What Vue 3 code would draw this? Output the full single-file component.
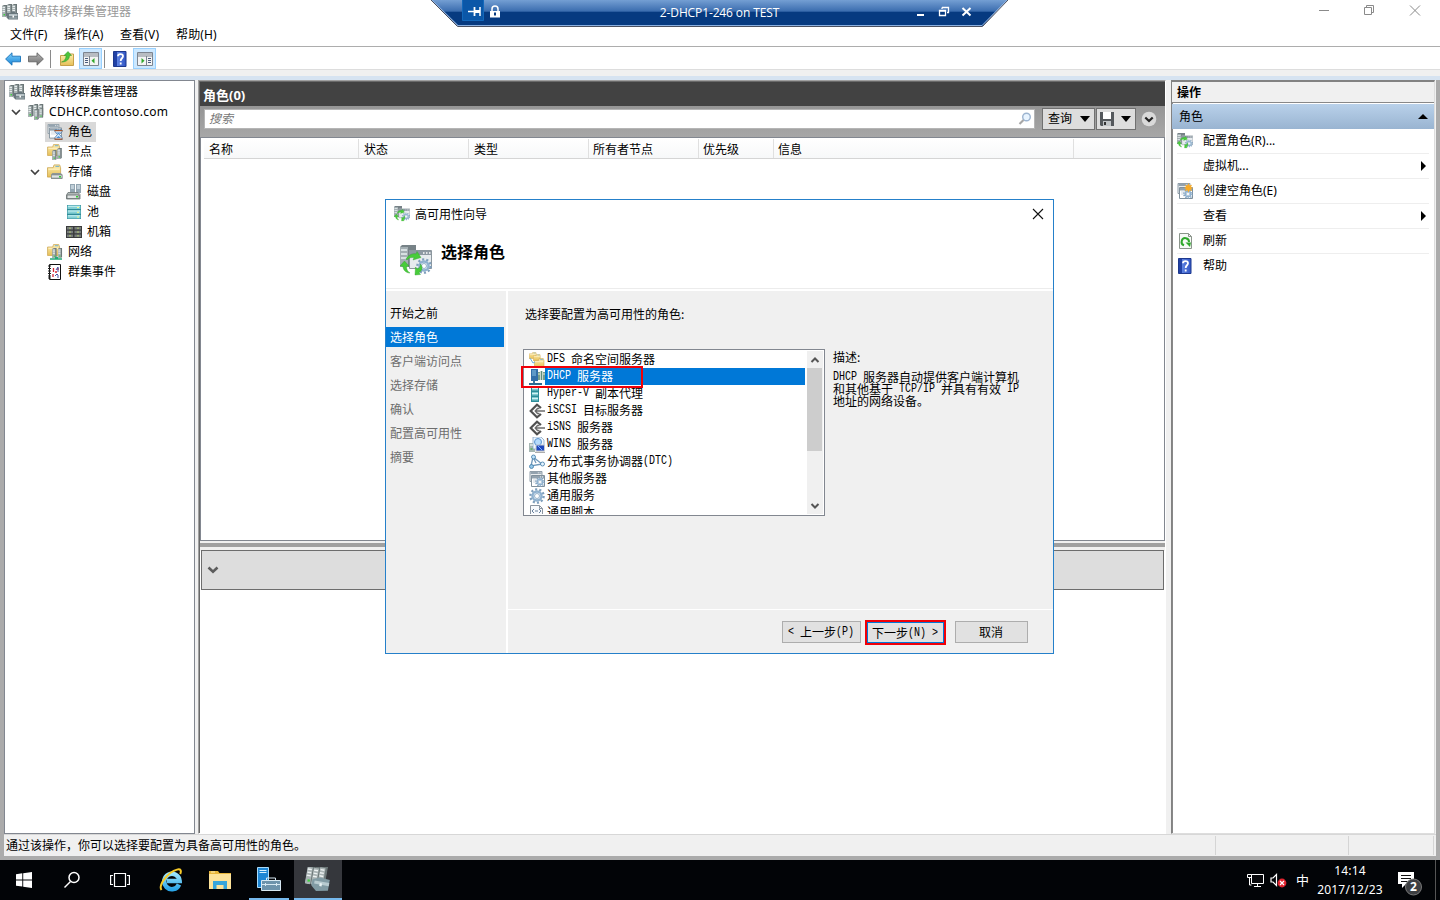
<script setup>
import { h } from 'vue'

// Splits mixed text so that the narrow console-style Latin runs keep a 6px advance.
const Sun = (props) =>
  h('span', { class: 'sun' }, props.t.split(/([\x20-\x7e]+)/).filter(Boolean).map((s) =>
    /^[\x20-\x7e]+$/.test(s) ? h('span', { class: 'lat' }, s) : s))
Sun.props = ['t']

const menus = ['文件(F)', '操作(A)', '查看(V)', '帮助(H)']
const tree = [
  { t: '故障转移群集管理器', i: 'cluster', l: 0 },
  { t: 'CDHCP.contoso.com', i: 'servers', l: 1, open: true, wide: true },
  { t: '角色', i: 'roles', l: 2, on: true },
  { t: '节点', i: 'nodes', l: 2 },
  { t: '存储', i: 'storage', l: 2, open: true },
  { t: '磁盘', i: 'disk', l: 3 },
  { t: '池', i: 'pool', l: 3 },
  { t: '机箱', i: 'chassis', l: 3 },
  { t: '网络', i: 'network', l: 2 },
  { t: '群集事件', i: 'events', l: 2 }
]
const columns = ['名称', '状态', '类型', '所有者节点', '优先级', '信息', '']
const actions = [
  { t: '配置角色(R)...', i: 'wizard' },
  { t: '虚拟机...', sub: true },
  { t: '创建空角色(E)', i: 'newrole' },
  { t: '查看', sub: true },
  { t: '刷新', i: 'refresh' },
  { t: '帮助', i: 'help' }
]
const steps = ['开始之前', '选择角色', '客户端访问点', '选择存储', '确认', '配置高可用性', '摘要']
const roles = [
  ['dfs', 'DFS 命名空间服务器'],
  ['dhcp', 'DHCP 服务器'],
  ['hyperv', 'Hyper-V 副本代理'],
  ['iscsi', 'iSCSI 目标服务器'],
  ['iscsi', 'iSNS 服务器'],
  ['wins', 'WINS 服务器'],
  ['dtc', '分布式事务协调器(DTC)'],
  ['other', '其他服务器'],
  ['gear', '通用服务'],
  ['scripticon', '通用脚本']
]
const desc = ['DHCP 服务器自动提供客户端计算机', '和其他基于 TCP/IP 并具有有效 IP', '地址的网络设备。']
</script>

<template>
  <div class="screen">
    <svg class="defs" width="0" height="0">
      <defs>
        <linearGradient id="gBlue" x1="0" y1="0" x2="0" y2="1"><stop offset="0" stop-color="#7fd0fa" /><stop offset="1" stop-color="#1583d8" /></linearGradient>
        <linearGradient id="gGray" x1="0" y1="0" x2="0" y2="1"><stop offset="0" stop-color="#b5b5b5" /><stop offset="1" stop-color="#707070" /></linearGradient>
        <linearGradient id="gFold" x1="0" y1="0" x2="0" y2="1"><stop offset="0" stop-color="#fdeeb0" /><stop offset="1" stop-color="#e6bf57" /></linearGradient>
        <linearGradient id="gHelp" x1="0" y1="0" x2="1" y2="0"><stop offset="0" stop-color="#2141a5" /><stop offset=".3" stop-color="#2141a5" /><stop offset=".32" stop-color="#5b80e0" /><stop offset="1" stop-color="#3256c4" /></linearGradient>
        <linearGradient id="gBar" x1="0" y1="0" x2="0" y2="1"><stop offset="0" stop-color="#79a3d6" /><stop offset=".46" stop-color="#3a6cae" /><stop offset=".47" stop-color="#063a80" /><stop offset="1" stop-color="#063a80" /></linearGradient>
        <linearGradient id="gIe" x1="0" y1="0" x2="0" y2="1"><stop offset="0" stop-color="#9be6fd" /><stop offset="1" stop-color="#2ba6e8" /></linearGradient>
      </defs>
      <symbol id="srv" viewBox="0 0 5 12">
        <path d="M0 1l2-1h3v11l-2 1H0z" fill="#6c7778" /><path d="M0 1h3.5v11H0z" fill="#a9b3b4" />
        <path d="M.5 2.5h2.5M.5 4.5h2.5M.5 6.5h2.5" stroke="#eef3f3" stroke-width=".9" /><path d="M1.5 9h1.5v1.4H1.5z" fill="#3fd13f" />
      </symbol>
      <symbol id="servers" viewBox="0 0 16 16">
        <use href="#srv" x="0" y="1" width="5" height="12" /><use href="#srv" x="5.2" y="0" width="5" height="12" /><use href="#srv" x="10.5" y="0" width="5" height="12" />
        <use href="#srv" x="6" y="5" width="5" height="11" /><use href="#srv" x="11" y="4" width="4.5" height="10" />
      </symbol>
      <symbol id="cluster" viewBox="0 0 16 16">
        <use href="#srv" x="0" y="1" width="5" height="12" /><use href="#srv" x="5" y="0" width="5" height="12" /><use href="#srv" x="10" y="0" width="5" height="12" />
        <path d="M4.5 9h4l1-1.500h3l1 1.500H16v6.500H6.500l-2-2z" fill="#69777d" /><path d="M7 10h8.500v2H7z" fill="#b6c2c6" /><path d="M7 12.500h8.500V15H7z" fill="#8b999e" /><path d="M10.500 11.500h1.500v2h-1.500z" fill="#fff" />
      </symbol>
      <symbol id="win" viewBox="0 0 14 12">
        <path d="M.5.5h13v11H.5z" fill="#fff" stroke="#80909c" /><path d="M1 1h12v2.500H1z" fill="#93a2ae" /><path d="M9 2h1m1 0h1" stroke="#fff" /><path d="M2 5h10M2 7h10" stroke="#ccd6df" />
      </symbol>
      <symbol id="roles" viewBox="0 0 16 16">
        <use href="#win" x="0" y="0" width="13" height="10" /><use href="#win" x="2" y="3" width="13" height="12" />
        <path d="M8 6h7v1.500l-2.500 3 2.500 3V15.500H8v-2l2.500-3L8 7.500z" fill="#dcefff" stroke="#3b6ea5" stroke-width=".8" /><path d="M7.500 6h8v1.300h-8zM7.500 14.500h8v1.300h-8z" fill="#a5562c" /><path d="M9.500 8.500h4l-2 2zM9 14l2.500-2 2.500 2z" fill="#4d92d8" />
      </symbol>
      <symbol id="folder" viewBox="0 0 16 14">
        <path d="M.5 3.500h6l1-3h6l1 3v10h-14z" fill="url(#gFold)" stroke="#c9a046" stroke-width=".8" /><path d="M9 2h4" stroke="#5aa6d8" /><path d="M1.500 5h12" stroke="#fff6d2" />
      </symbol>
      <symbol id="nodes" viewBox="0 0 16 16">
        <use href="#folder" x="0" y="0" width="14" height="12" /><use href="#srv" x="5" y="6" width="5" height="10" /><use href="#srv" x="10" y="4" width="5" height="11" />
      </symbol>
      <symbol id="storage" viewBox="0 0 16 16">
        <use href="#folder" x="0" y="0" width="15" height="14" /><path d="M4 10.500l1.500-1.500h8l2 1.500V15H4z" fill="#8e9696" /><path d="M4.500 11h10.500v3H4.500z" fill="#dfe4e4" stroke="#808888" stroke-width=".6" /><path d="M12 12h2v1.500h-2z" fill="#32cd32" />
      </symbol>
      <symbol id="disk" viewBox="0 0 16 16">
        <path d="M4 0h5v9H4zM10 0h5v9h-5z" fill="#93a6b2" /><path d="M5 2h3M5 4h3M11 2h3M11 4h3" stroke="#eef8ff" /><path d="M2 8.500h10l2 2V15H.5v-4z" fill="#b0b8b8" stroke="#6b7474" stroke-width=".8" /><path d="M1 11h12v3.500H1z" fill="#dfe3e3" stroke="#677070" stroke-width=".8" /><path d="M10 12h2v1.500h-2z" fill="#32cd32" />
      </symbol>
      <symbol id="pool" viewBox="0 0 16 16">
        <path d="M1 1h14v14H1z" fill="#2f8c98" /><path d="M1.500 1.500h13v3.500h-13zM1.500 6.200h13v3.500h-13zM1.500 11h13v3.500h-13z" fill="#84cfd5" /><path d="M2 2.300h12M2 7h12M2 11.800h12" stroke="#c8f0f2" /><path d="M11 3.500h2M11 8.300h2M11 13h2" stroke="#f4fb8c" />
      </symbol>
      <symbol id="chassis" viewBox="0 0 16 16">
        <path d="M0 2h16v12H0z" fill="#3a3c3c" /><path d="M1 3h6v2.500H1zM1 6.800h6v2.500H1zM1 10.600h6V13H1zM8.500 3H15v2.500H8.500zM8.500 6.800H15v2.500H8.500zM8.500 10.600H15V13H8.500z" fill="#777c7c" /><path d="M4 3.500v1.500M4 7.300v1.500M4 11v1.500M12 3.500v1.500M12 7.300v1.500M12 11v1.500" stroke="#c6e36b" />
      </symbol>
      <symbol id="network" viewBox="0 0 16 16">
        <use href="#folder" x="0" y="0" width="14" height="12" /><use href="#srv" x="5" y="4" width="5" height="10" /><use href="#srv" x="10.500" y="4" width="5" height="10" /><path d="M3 15h12M8 13.500h3" stroke="#25a978" stroke-width="1.600" />
      </symbol>
      <symbol id="events" viewBox="0 0 16 16">
        <path d="M2.500.5h11v15h-11z" fill="#fff" stroke="#111" /><path d="M1 2h3M1 4.500h3M1 7h3M1 9.500h3M1 12h3M1 14h3" stroke="#222" /><path d="M6.500 4v4M6 10v3M8 8h2M11 4v2" stroke="#d32633" stroke-width="1.300" /><path d="M9 6l2-3v5M8 12l2-2 1 1v3" fill="none" stroke="#4453a5" />
      </symbol>
      <symbol id="gear" viewBox="0 0 16 16">
        <circle cx="8" cy="8" r="6.600" fill="none" stroke="#7f9fbc" stroke-width="2.400" stroke-dasharray="2.100 2.046" /><circle cx="8" cy="8" r="4.500" fill="#edf5fc" stroke="#8fb1cf" stroke-width="2.400" /><circle cx="8" cy="8" r="2.500" fill="#fff" stroke="#6f94b4" stroke-width=".7" />
      </symbol>
      <symbol id="wizard" viewBox="0 0 32 32">
        <path d="M0 2l2-2h14v22H0z" fill="#778287" /><path d="M0 2h8v20H0z" fill="#a4afb3" /><path d="M1 5h6M1 9h6M1 13h6" stroke="#e9f1f2" stroke-width="1.500" />
        <path d="M9.500 5.500h22v18h-22z" fill="#e6ebee" stroke="#8c979e" /><path d="M10 6h21v4H10z" fill="#8d99a2" /><path d="M23 8h1.500M26 8h1.500M29 8h1.500" stroke="#fff" stroke-width="1.500" />
        <use href="#gear" x="16" y="13" width="16" height="16" /><path d="M6 14c3-5 8-6 10-5l1-2.500 4 6-8 2.500 1-2.500c-3 0-5 0-7 2.500zM0 21l4.500-5 4.500 5-2.500.5c0 3 1 5 3.500 6.500-4 0-7-3-7-6.500zM15 30l.5-8 2 2c2-1 3-3 3-5 3 4 1 7-1.500 8.500l1.500 2z" fill="#48cc3a" stroke="#2d9c2a" stroke-width=".4" />
      </symbol>
      <symbol id="other" viewBox="0 0 16 16">
        <use href="#win" x="0" y="0" width="14" height="11" /><use href="#win" x="2" y="4" width="14" height="12" /><use href="#gear" x="6" y="6" width="10" height="10" />
      </symbol>
      <symbol id="newrole" viewBox="0 0 16 16">
        <use href="#other" width="16" height="16" /><path d="M11.500 0l1 2.500 2.500-.8-1 2.300 2 1-2 1 1 2-2.500-.8-1 2.300-1-2.300L8 8l1-2-2-1 2-1-1-2.300 2.500.8z" fill="#f8ab27" />
      </symbol>
      <symbol id="refresh" viewBox="0 0 16 16">
        <path d="M2.500.5h9l3 3v12h-12z" fill="#f7faf7" stroke="#8b958b" /><path d="M11.500.5v3h3" fill="none" stroke="#8b958b" /><path d="M7 12.300A3.700 3.700 0 1 1 12 9" fill="none" stroke="#2ea82b" stroke-width="2" /><path d="M8.500 9.500h5.500l-1 4.500z" fill="#2ea82b" />
      </symbol>
      <symbol id="help" viewBox="0 0 16 16">
        <path d="M1.500.5h12.500v15H1.500z" fill="url(#gHelp)" stroke="#1d388e" /><path d="M6 5.300C6 2.500 11 2.500 11 5.300c0 2-2.300 2-2.300 4.700M8.700 11.500v2" fill="none" stroke="#fff" stroke-width="1.800" />
      </symbol>
      <symbol id="dfs" viewBox="0 0 16 16">
        <use href="#folder" x="0" y="0" width="8" height="7" /><use href="#folder" x="4" y="2" width="8" height="7" /><use href="#folder" x="5" y="6" width="11" height="10" /><path d="M1 6l3 5 2-1" fill="none" stroke="#6db1dc" />
      </symbol>
      <symbol id="dhcp" viewBox="0 0 16 16">
        <path d="M2 0h7v12H2z" fill="#316fa9" /><path d="M3 2h4M3 4h4M3 6h4" stroke="#8bc5e5" /><path d="M10 3v8M12.500 2v9M15 3v8" stroke="#5f8f77" stroke-width="1.700" /><path d="M9.500 5h1M14.500 5h1" stroke="#eec" stroke-width="2" /><path d="M5 12v2M0 15h13" stroke="#2b6a93" stroke-width="1.800" />
      </symbol>
      <symbol id="hyperv" viewBox="0 0 16 16">
        <path d="M2 0h8v16H2z" fill="#2c8c98" /><path d="M3 1h6v3.500H3zM3 6h6v3.500H3zM3 11h6v3.500H3z" fill="#7fc9d0" /><path d="M3 2.500h6M3 7.500h6M3 12.500h6" stroke="#d0f2f3" />
      </symbol>
      <symbol id="iscsi" viewBox="0 0 16 16">
        <path d="M12 5L8 1.700 1.700 8 8 14.300 12 11" fill="none" stroke="#505050" stroke-width="2.200" /><path d="M7 8h9M10.500 5.500L8.500 5.500 6.300 8l2.200 2.500h2" fill="none" stroke="#6c6c6c" stroke-width="1.500" />
      </symbol>
      <symbol id="wins" viewBox="0 0 16 16">
        <path d="M0 6h6v9H0z" fill="#a6b7b3" /><path d="M4 0h8l3 3v9H4z" fill="#eef7ff" stroke="#7698bd" stroke-width=".7" /><circle cx="9" cy="5" r="3.500" fill="#b4dafb" stroke="#5b94d0" /><path d="M7 8h8.500v6H7z" fill="#1d46bd" stroke="#c7cbd0" /><path d="M9 9l4 4" stroke="#7fb0ff" /><path d="M6 15.300h10" stroke="#999" /><path d="M1 8h3" stroke="#fff" /><path d="M1.500 12h2" stroke="#2ea82b" />
      </symbol>
      <symbol id="dtc" viewBox="0 0 16 16">
        <path d="M4 3l-2 9 11-2zM4 3l3 6" fill="none" stroke="#7098ba" stroke-width="1.300" /><circle cx="4.500" cy="3" r="2" fill="#bfe2fa" stroke="#3f78a5" stroke-width=".8" /><circle cx="2.500" cy="12.500" r="2" fill="#92c7e9" stroke="#3f78a5" stroke-width=".8" /><circle cx="13.500" cy="10" r="2" fill="#e4f4ff" stroke="#3f78a5" stroke-width=".8" />
      </symbol>
      <symbol id="scripticon" viewBox="0 0 16 16">
        <path d="M1.500.5h9l3 3v12h-12z" fill="#f7f9fc" stroke="#8b95a0" /><path d="M10.500.5v3h3" fill="none" stroke="#8b95a0" /><path d="M5 4L3 6l2 2M10 4l2 2-2 2M6 6h3" fill="none" stroke="#68819c" />
      </symbol>
    </svg>

    <header class="titlebar">
      <svg class="i16"><use href="#cluster" /></svg><span>故障转移群集管理器</span>
      <svg class="caption" width="104" height="16" viewBox="0 0 104 16" fill="none" stroke="#8a8a8a"><path d="M1 8.500h10M46.500 5.500h7v7h-7zM48.500 5.500v-2h7v7h-2M92 3.500l10 10M102 3.500l-10 10" /></svg>
    </header>
    <nav class="menubar"><span v-for="m in menus" :key="m">{{ m }}</span></nav>
    <div class="toolbar">
      <svg class="tb arrow" viewBox="0 0 16 16"><path d="M.6 8L7 1.800v3.400h8.500v5.600H7v3.400z" fill="url(#gBlue)" stroke="#1872b8" stroke-width=".9" /></svg>
      <svg class="tb arrow2" viewBox="0 0 16 16"><path d="M15.400 8L9 1.800v3.400H.5v5.600H9v3.400z" fill="url(#gGray)" stroke="#666" stroke-width=".9" /></svg>
      <i class="sep s1"></i>
      <svg class="tb up" viewBox="0 0 16 16"><path d="M1.500 4.500h5l1-1.500h7v11.500h-13z" fill="url(#gFold)" stroke="#c6a04a" /><path d="M2.500 11C6 10 7 7 7 4.500H5L9 .5l3.500 4h-2C10.500 8 8 11 2.500 11z" fill="#4bc43b" stroke="#2a9122" stroke-width=".5" /></svg>
      <span class="tog t1"><svg width="16" height="16" viewBox="0 0 16 16"><path d="M.5 1.500h15v13H.5z" fill="#f4f4f4" stroke="#7d8590" /><path d="M1 3h14M.5 5h15" stroke="#7d8590" /><path d="M6.500 5v9" stroke="#7d8590" /><path d="M2 7.500h3M2 9.500h3M2 11.500h3" stroke="#4a5b7c" /><path d="M11.500 7v5.500L8.500 9.700z" fill="#31a82b" /></svg></span>
      <i class="sep s2"></i>
      <svg class="tb hp"><use href="#help" /></svg>
      <span class="tog t2"><svg width="16" height="16" viewBox="0 0 16 16"><path d="M.5 1.500h15v13H.5z" fill="#f4f4f4" stroke="#7d8590" /><path d="M1 3h14M.5 5h15" stroke="#7d8590" /><path d="M9.500 5v9" stroke="#7d8590" /><path d="M11 7.500h3M11 9.500h3M11 11.500h3" stroke="#4a5b7c" /><path d="M4.500 7v5.500l3-2.800z" fill="#31a82b" /></svg></span>
    </div>

    <div class="work">
      <div class="frame">
        <aside class="tree">
          <div v-for="n in tree" :key="n.t" class="node" :class="'l' + n.l">
            <svg v-if="n.open" class="chev" viewBox="0 0 10 10"><path d="M1 3l4 4 4-4" fill="none" stroke="#404040" stroke-width="1.700" /></svg>
            <span class="nlabel" :class="{ on: n.on }"><svg class="i16"><use :href="'#' + n.i" /></svg><b :class="{ wide: n.wide }">{{ n.t }}</b></span>
          </div>
        </aside>

        <main class="center">
          <h1>角色(0)</h1>
          <div class="searchrow">
            <div class="search"><em>搜索</em><svg width="14" height="14" viewBox="0 0 14 14"><circle cx="8.500" cy="5" r="3.800" fill="#e8f4ff" stroke="#9cb4d0" stroke-width="1.400" /><path d="M5.500 8L1.500 12" stroke="#a7a7a7" stroke-width="2.200" /></svg></div>
            <div class="qbtn">查询<i class="dd"></i></div>
            <div class="qbtn save"><svg width="14" height="14" viewBox="0 0 14 14"><path d="M0 0h14v14H1l-1-1z" fill="#54585c" /><path d="M3 0h8v7H3z" fill="#fff" /><path d="M3 9h8v5H3z" fill="#bfc3c6" /><path d="M4 10h2v3H4z" fill="#333" /></svg><i class="dd"></i></div>
            <svg class="round" width="16" height="16" viewBox="0 0 16 16"><circle cx="8" cy="8" r="7.300" fill="#d9d9d9" /><path d="M4.300 6.500L8 10l3.700-3.500" fill="none" stroke="#222" stroke-width="2.200" /></svg>
          </div>
          <div class="list"><div class="cols"><span v-for="(c, k) in columns" :key="k">{{ c }}</span></div></div>
          <div class="split"></div>
          <div class="detail"><svg width="12" height="10" viewBox="0 0 12 10"><path d="M1.500 2.500L6 6.700l4.500-4.200" fill="none" stroke="#5c5c5c" stroke-width="2.600" /></svg></div>
        </main>

        <aside class="actions">
          <div class="ahead">操作</div>
          <div class="asec">角色<i></i></div>
          <div v-for="a in actions" :key="a.t" class="act"><svg class="i16"><use v-if="a.i" :href="'#' + a.i" /></svg><span>{{ a.t }}</span><i v-if="a.sub"></i></div>
        </aside>
      </div>
      <footer class="status"><span>通过该操作，你可以选择要配置为具备高可用性的角色。</span><i></i><i></i><i></i></footer>
    </div>

    <div class="taskbar">
      <div class="task"><svg width="16" height="16" viewBox="0 0 16 16" fill="#fff"><path d="M0 2.200L6.300 1.300v6.200H0zM7.200 1.200L16 0v7.500H7.200zM0 8.400h6.300v6.200L0 13.800zM7.200 8.400H16V16l-8.800-1.300z" /></svg></div>
      <div class="task"><svg width="18" height="18" viewBox="0 0 18 18" fill="none" stroke="#fff" stroke-width="1.500"><circle cx="11" cy="6.500" r="5" /><path d="M7.500 10.500L1.500 16.500" /></svg></div>
      <div class="task"><svg width="20" height="16" viewBox="0 0 20 16" fill="none" stroke="#fff" stroke-width="1.200"><path d="M4.500 1.500h11v13h-11zM3 3.500H.6v9H3M17 3.500h2.400v9H17" /></svg></div>
      <div class="task ie"><svg width="24" height="24" viewBox="0 0 24 24"><path d="M20 16.500A7.700 7.700 0 1 1 20.600 13H8" fill="none" stroke="url(#gIe)" stroke-width="4.600" /><path d="M2.500 22C-1 17 9 4 18 1.600c4-1 4.500 1.400 3.200 4.400" fill="none" stroke="#f7ca28" stroke-width="2" /></svg></div>
      <div class="task fd"><svg width="22" height="20" viewBox="0 0 22 20"><path d="M0 1h9l1.500 2H22v4H0z" fill="#e8b63b" /><path d="M2 2h4" stroke="#fff2b8" /><path d="M0 4h22v15H0z" fill="#fde39a" /><path d="M4 19v-8h14v8h-3.500v-4h-7v4z" fill="#37a6dc" /></svg></div>
      <div class="task sm run"><svg width="24" height="24" viewBox="0 0 24 24"><path d="M.5.500h11v20H.5z" fill="#1d86d4" stroke="#a9dbfa" /><path d="M2.500 3.500h7M2.500 5.500h7" stroke="#d6f1ff" /><path d="M4.500 13.500h19v10h-19z" fill="#6d93ac" stroke="#d7e8f2" /><path d="M9.500 13v-2h9v2M5 17.500h18M8.500 16v3M19.500 16v3" fill="none" stroke="#d7e8f2" /></svg></div>
      <div class="task cl run"><svg width="26" height="25" viewBox="0 0 16 16"><g transform="rotate(10 8 8)"><use href="#srv" x="0" y="0" width="5" height="12" /><use href="#srv" x="4" y="0" width="5" height="12" /><use href="#srv" x="8" y="-1" width="5" height="12" /><path d="M4.500 8.500L9 6.500l6.500.500v7L8 15.500l-3.500-3z" fill="#819ba4" /><path d="M6 9h9.500v2H6z" fill="#b8cbd0" /><path d="M9.500 10h1.500v2H9.500z" fill="#e8f2f3" /></g></svg></div>
      <div class="tray">
        <svg class="t-net" width="17" height="15" viewBox="0 0 17 15" fill="none" stroke="#fff"><path d="M4.500 1.500h12v9h-12zM10.500 10.500v3M7 13.500h7M.5 1.500h4v3h-4zM2.500 4.500v7.500h2" fill="#08090c" /></svg>
        <svg class="t-vol" width="17" height="15" viewBox="0 0 17 15"><path d="M1 5h2l3.500-3.500v11L3 9H1z" fill="none" stroke="#fff" stroke-width="1.200" /><circle cx="12" cy="10" r="4.400" fill="#e0242f" /><path d="M10 8l4 4M14 8l-4 4" stroke="#fff" stroke-width="1.200" /></svg>
        <span class="ime">中</span>
        <div class="clock"><span>14:14</span><span>2017/12/23</span></div>
        <svg class="t-note" width="26" height="26" viewBox="0 0 26 26"><path d="M1 2h16v12H9l-4 4v-4H1z" fill="#fff" /><path d="M4 5.500h10M4 8.500h10M4 11.500h6" stroke="#111" stroke-width="1.200" /><circle cx="16.500" cy="17" r="8" fill="#3d3f42" stroke="#777" /><text x="16.500" y="21.300" text-anchor="middle" font-family="Open Sans, sans-serif" font-weight="bold" font-size="12" fill="#fff">2</text></svg>
        <i class="desk"></i>
      </div>
    </div>

    <div class="rdp">
      <svg width="577" height="27" viewBox="0 0 577 27"><path d="M0-1h577L551.500 26H27z" fill="url(#gBar)" /><path d="M1 0L27 25.500h524L576 0" fill="none" stroke="#8bb0e0" /><path d="M0 0L26.500 26.500h525L577 0" fill="none" stroke="#4a5060" />
        <path d="M31.500-.5h21v21h-21z" fill="#0b57a8" stroke="#1268bb" /><path d="M37 11.500h6M49 7v9" stroke="#fff" stroke-width="1.500" /><path d="M43.500 7v9" stroke="#fff" stroke-width="1.800" /><path d="M43 11.500h6" stroke="#fff" stroke-width="3" />
        <path d="M59 11h10v6.500H59z" fill="#fff" /><path d="M61 11V9a3 3 0 0 1 6 0v2" fill="none" stroke="#fff" stroke-width="1.500" /><path d="M64 12.500v3" stroke="#063a80" stroke-width="2" />
        <path d="M486 15h7" stroke="#fff" stroke-width="2" /><path d="M508.500 10.500h6v5h-6zM508 11h7M511 7.500h6.500v5H516M511 7.500v1.500" fill="none" stroke="#fff" stroke-width="1.300" /><path d="M531.500 8l8 7.500M539.500 8l-8 7.500" stroke="#fff" stroke-width="2" /></svg>
      <span>2-DHCP1-246 on TEST</span>
    </div>

    <section class="wizard">
      <div class="wtitle"><svg class="i16"><use href="#wizard" /></svg><span>高可用性向导</span><svg class="wx" width="12" height="12" viewBox="0 0 12 12"><path d="M1 1l10 10M11 1L1 11" stroke="#111" stroke-width="1.100" /></svg></div>
      <div class="whead"><svg width="32" height="32"><use href="#wizard" /></svg><h2>选择角色</h2></div>
      <div class="wbody">
        <ol class="steps"><li v-for="(s, k) in steps" :key="s" :class="{ on: k === 1, later: k > 1 }">{{ s }}</li></ol>
        <div class="wcontent">
          <div class="wmain">
            <p class="prompt">选择要配置为高可用性的角色:</p>
            <div class="pick">
              <div class="box">
                <div class="rows"><div v-for="(r, k) in roles" :key="r[1]" class="row" :class="{ on: k === 1 }"><svg class="i16"><use :href="'#' + r[0]" /></svg><Sun :t="r[1]" /></div></div>
                <div class="scroll"><svg width="16" height="17" viewBox="0 0 16 17"><path d="M4.500 11L8 7.500l3.500 3.500" fill="none" stroke="#555" stroke-width="2" /></svg><i></i><svg width="16" height="17" viewBox="0 0 16 17"><path d="M4.500 7L8 10.500 11.500 7" fill="none" stroke="#555" stroke-width="2" /></svg></div>
                <div class="mark"></div>
              </div>
              <div class="desc"><p>描述:</p><div v-for="d in desc" :key="d"><Sun :t="d" /></div></div>
            </div>
          </div>
          <div class="btns">
            <button><Sun t="< 上一步(P)" /></button>
            <button class="next"><Sun t="下一步(N) >" /></button>
            <button class="cancel">取消</button>
          </div>
        </div>
      </div>
    </section>
  </div>
</template>

<style>
html, body { margin: 0; overflow: hidden; }
.sun { white-space: pre; display: flex; align-items: center; }
.lat { font-family: "Liberation Mono", monospace; font-size: 10px; white-space: pre; transform: translateY(1px) scaleY(1.2); }
</style>
<style scoped>
* { box-sizing: border-box; }
.screen { position: relative; width: 1440px; height: 900px; overflow: hidden; background: #fff; display: flex; flex-direction: column; font: 12px/20px "Noto Sans", "Noto Sans CJK SC", sans-serif; color: #000; white-space: nowrap; }
.defs { position: absolute; }
.i16 { width: 16px; height: 16px; flex: none; }
.titlebar { height: 24px; display: flex; align-items: center; padding: 0 18px 1px 2px; color: #999; }
.titlebar span { margin-left: 5px; }
.caption { margin: 0 0 3px auto; }
.menubar { height: 22px; display: flex; padding-left: 10px; line-height: 21px; }
.menubar span { width: 56px; letter-spacing: .15px; }
.menubar span:first-child { width: 54px; letter-spacing: 0; }
.toolbar { height: 24px; border-top: 1px solid #adadad; border-bottom: 1px solid #ddd; display: flex; align-items: center; padding: 1px 0 0 5px; flex: none; }
.tb { width: 16px; height: 16px; margin-top: 1px; }
.arrow2 { margin-left: 7px; }
.sep { width: 1px; height: 18px; background: #8a8a8a; }
.s1 { margin: 0 8px 0 6px; }
.tog { width: 23px; height: 21px; background: #cce8ff; border: 1px solid #99d1ff; display: flex; align-items: center; justify-content: center; padding-top: 1px; }
.t1 { margin-left: 4px; }
.s2 { margin: 0 7px 0 2px; }
.t2 { margin-left: 5px; }
.work { height: 790px; flex: none; border-top: 6px solid #f0f0f0; position: relative; display: flex; flex-direction: column; background: linear-gradient(#d6e3f1 4px, #ababab 4px); padding: 4px 4px 4px; }
.frame { height: 754px; display: flex; background: #f0f0f0; flex: none; }
.tree { width: 191px; border: 1px solid #828790; background: #fff; padding-top: 1px; }
.node { height: 20px; display: flex; align-items: center; position: relative; }
.node.l0 { padding-left: 4px; }
.node.l1 { padding-left: 23px; }
.node.l2 { padding-left: 42px; }
.node.l3 { padding-left: 61px; }
.chev { position: absolute; width: 10px; height: 10px; top: 5px; }
.l1 .chev { left: 6px; }
.l2 .chev { left: 25px; }
.nlabel { display: flex; align-items: center; height: 20px; }
.nlabel b { font-weight: normal; padding: 0 4px 0 5px; line-height: 18px; }
.nlabel .wide { letter-spacing: .3px; }
.nlabel.on { background: #d9d9d9; margin-left: -2px; padding-left: 2px; }
.center { width: 968px; margin-left: 3px; border: 1px solid #a0a0a0; border-right-color: #fff; border-bottom-color: #fff; background: #fff; box-shadow: inset 1px 1px #696969; padding: 1px 0 0 1px; display: flex; flex-direction: column; }
.center h1 { margin: 0; height: 24px; flex: none; background: #424242; color: #fff; font: bold 13px/26px "Noto Sans", "Noto Sans CJK SC", sans-serif; padding-left: 3px; letter-spacing: 0; }
.searchrow { height: 31px; flex: none; background: linear-gradient(#959595, #a7a7a7); display: flex; align-items: flex-start; padding: 3px 7px 0 4px; }
.search { width: 831px; height: 20px; background: #fff; border: 1px solid #b5b5b5; display: flex; align-items: center; justify-content: space-between; padding: 0 2px 0 4px; color: #777; }
.qbtn { width: 53px; height: 22px; margin-left: 7px; margin-top: -1px; border: 1px solid #707070; background: #ddd; display: flex; align-items: center; justify-content: space-between; padding: 0 4px 0 5px; }
.save { width: 40px; margin-left: 1px; padding: 0 4px 0 3px; }
.dd { border: 5px solid transparent; border-top: 6px solid #000; border-bottom: 0; }
.round { margin: 2px 0 0 5px; }
.list { height: 404px; flex: none; border: 1px solid #828790; background: #fff; padding: 1px 3px; }
.cols { height: 20px; display: grid; grid-template-columns: 155px 110px 120px 110px 75px 300px 1fr; background: linear-gradient(#fff, #f7f8f9); border-bottom: 1px solid #d5d5d5; }
.cols span { border-right: 1px solid #e0e0e0; padding: 1px 0 0 5px; line-height: 18px; height: 19px; }
.cols span { line-height: 20px; }
.cols span:nth-child(n+4) { padding-left: 4px; }
.cols span:last-child { border: 0; }
.split { height: 10px; flex: none; background: linear-gradient(#f0f0f0 2px, #a0a0a0 2px, #a0a0a0 6px, #f0f0f0 6px); }
.detail { height: 40px; flex: none; margin: -1px 1px 0 1px; border: 1px solid #6d6d6d; background: #ddd; display: flex; align-items: center; padding-left: 5px; }
.actions { width: 264px; margin-left: 5px; background: #fff; border: solid #828282; border-width: 2px 1px 1px 1px; border-right-color: #ddd; border-bottom-color: #ddd; box-shadow: inset 1px 0 #888; }
.ahead { height: 21px; background: #f0f0f0; border-bottom: 1px solid #888; font-weight: bold; padding-left: 5px; line-height: 21px; }
.asec { height: 25px; margin-top: 1px; background: linear-gradient(#b9d1ea, #99b4d1); padding: 0 6px 0 7px; display: flex; align-items: center; justify-content: space-between; }
.asec i { border: 5px solid transparent; border-bottom-color: #000; border-top: 0; }
.act { height: 25px; margin: 0 5px; border-bottom: 1px solid #eee; display: flex; align-items: center; }
.act:last-child { border-color: transparent; }
.act span { margin-left: 10px; }
.act i { margin: 0 3px 0 auto; border: 5px solid transparent; border-left-color: #000; border-right: 0; }
.status { height: 22px; flex: none; background: #f0f0f0; border-top: 1px solid #d7d7d7; display: flex; line-height: 21px; }
.status span { width: 1211px; padding-left: 2px; }
.status i { border-left: 1px solid #d5d5d5; width: 133px; margin-top: 1px; height: 19px; }
.status i:nth-of-type(2) { width: 85px; }
.status i:last-child { width: 1px; }
.taskbar { height: 40px; flex: none; background: #020407; display: flex; }
.task { width: 48px; height: 40px; display: flex; align-items: center; justify-content: center; }
.ie { width: 54px; }
.fd { width: 44px; }
.sm { width: 40px; margin: 0 5px 0 7px; }
.run { border-bottom: 2px solid #76b9ed; }
.cl { background: #35373c; }
.tray { margin-left: auto; display: flex; align-items: center; color: #fff; }
.t-vol { margin-left: 6px; }
.ime { margin-left: 9px; font-size: 13px; }
.clock { width: 74px; margin-left: 4px; display: flex; flex-direction: column; text-align: center; line-height: 19px; letter-spacing: .15px; }
.t-note { margin: 6px 12px 0 10px; }
.desk { width: 1px; height: 40px; background: #555; margin-right: 4px; }
.rdp { position: absolute; left: 431px; top: 0; width: 577px; height: 27px; color: #fff; text-align: center; font: 12px/26px "Open Sans", sans-serif; letter-spacing: -.12px; }
.rdp svg { position: absolute; left: 0; top: 0; }
.rdp span { position: relative; }
.wizard { position: absolute; left: 385px; top: 199px; width: 669px; height: 455px; background: #fff; border: 1px solid #2580ca; display: flex; flex-direction: column; font-family: "Noto Sans CJK SC", sans-serif; }
.wtitle { height: 29px; display: flex; align-items: center; padding: 0 9px 2px 8px; }
.wtitle span { margin-left: 5px; }
.wx { margin-left: auto; }
.whead { height: 60px; display: flex; padding: 16px 0 0 14px; border-bottom: 1px solid #ececec; margin-bottom: 2px; flex: none; }
.whead h2 { margin: -6px 0 0 9px; font: bold 16px/24px "Noto Sans CJK SC", sans-serif; }
.wbody { flex: 1; display: flex; min-height: 0; }
.steps { width: 120px; margin: 0 2px 0 0; padding: 12px 0 0; list-style: none; background: #f0f0f0; }
.steps li { height: 20px; margin-bottom: 4px; padding-left: 4px; width: 118px; line-height: 20px; }
.steps .on { background: #0078d7; color: #fff; }
.steps .later { color: #6d6d6d; }
.wcontent { flex: 1; display: flex; flex-direction: column; background: #f0f0f0; }
.wmain { height: 319px; border-bottom: 1px solid #fff; padding: 13px 0 0 15px; flex: none; }
.prompt { margin: 0 0 25px 2px; line-height: 20px; }
.pick { display: flex; }
.box { width: 302px; height: 167px; border: 1px solid #828790; background: #fff; position: relative; display: flex; padding: 1px; }
.rows { width: 282px; overflow: hidden; }
.row { height: 17px; display: flex; align-items: center; padding-left: 4px; line-height: 16px; }
.row .sun { padding: 0 0 1px 2px; height: 17px; width: 260px; }
.row.on .sun { background: #0078d7; color: #fff; }
.scroll { width: 16px; background: #f0f0f0; display: flex; flex-direction: column; }
.scroll i { height: 83px; width: 15px; background: #cdcdcd; margin-bottom: auto; }
.mark { position: absolute; left: -3px; top: 16px; width: 122px; height: 22px; border: 2px solid #f00008; }
.desc { margin-left: 8px; line-height: 12px; }
.desc p { margin: 0 0 6px; line-height: 16px; }
.desc div { height: 12px; }
.btns { display: flex; padding: 11px 0 0 274px; }
button { width: 79px; height: 22px; padding: 0 1px 0 0; border: 1px solid #adadad; background: #e1e1e1; font: 12px/18px "Noto Sans CJK SC", sans-serif; color: #000; white-space: nowrap; display: flex; align-items: center; justify-content: center; }
.next { width: 81px; height: 25px; margin: -1px 9px 0 4px; border: 2px solid #f00008; box-shadow: inset 0 0 0 1px #0078d7; }
.cancel { width: 73px; }
</style>
